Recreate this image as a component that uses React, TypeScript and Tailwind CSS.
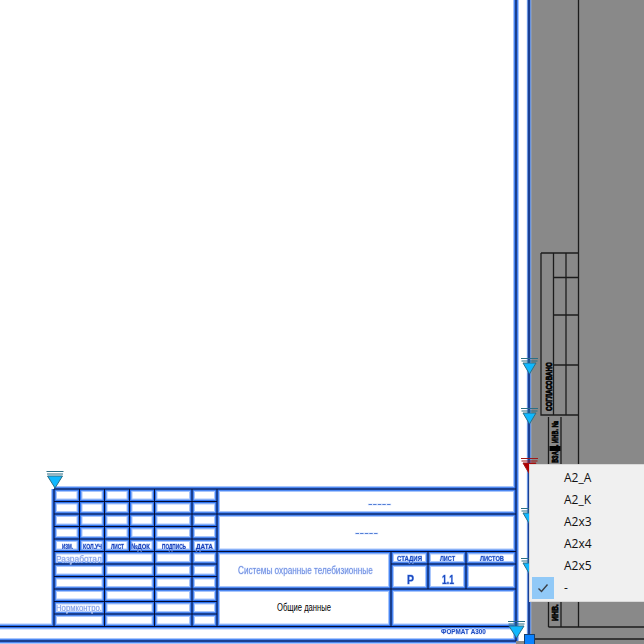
import React, { useLayoutEffect, useRef } from "react";

type L = [number, number, number, number];

const lines: L[] = [
  [516, 0, 516, 641],
  [0, 626.5, 516, 626.5],
  [0, 641, 516, 641],
  [54, 489, 516, 489],
  [54, 489, 54, 626.5],
  [54, 501.5, 217, 501.5],
  [54, 514, 516, 514],
  [54, 526.5, 217, 526.5],
  [54, 539, 217, 539],
  [54, 551.5, 516, 551.5],
  [54, 564, 217, 564],
  [54, 576.5, 217, 576.5],
  [54, 589, 516, 589],
  [54, 601.5, 217, 601.5],
  [54, 614, 217, 614],
  [79.5, 489, 79.5, 551.5],
  [104.5, 489, 104.5, 626.5],
  [129.5, 489, 129.5, 551.5],
  [154.5, 489, 154.5, 626.5],
  [192, 489, 192, 626.5],
  [217, 489, 217, 626.5],
  [391, 551.5, 391, 626.5],
  [428, 551.5, 428, 589],
  [466, 551.5, 466, 589],
  [391, 564, 516, 564],
];

const d = lines.map(([a, b, c, e]) => `M${a} ${b}L${c} ${e}`).join("");

const blackLines =
  "M578.5 0V627M541 253H578.5M541 253V415H578.5M553.5 253V415M566 253V415M553.5 277.5H578.5M553.5 315H578.5M553.5 365H578.5M548.5 417V627M561 417V627M548.5 627H644M531 639H644";

const markers: { x: number; y: number; red?: boolean; big?: boolean }[] = [
  { x: 529.5, y: 358 },
  { x: 529.5, y: 408 },
  { x: 529.5, y: 458, red: true },
  { x: 529.5, y: 508 },
  { x: 529.5, y: 558 },
  { x: 516.5, y: 621, big: true },
  { x: 55, y: 471, big: true },
];

function Marker({ x, y, red, big }: { x: number; y: number; red?: boolean; big?: boolean }) {
  const stroke = red ? "#a01818" : "#2b6f86";
  const fill = red ? "#b00000" : "#10b8ff";
  const h = big ? 17 : 16;
  const w = big ? 7.5 : 6.5;
  return (
    <g>
      <path d={`M${x - 8.5} ${y + 0.5}H${x + 8.5}M${x - 8} ${y + 3}H${x + 8}`} stroke={stroke} strokeWidth="1.2" fill="none" />
      <path d={`M${x - w} ${y + 5}H${x + w}L${x} ${y + h}Z`} fill={fill} stroke={stroke} strokeWidth="1" />
    </g>
  );
}

type T = { x: number; y: number; s: string; w: number; size: number; fill: string; bold?: boolean; halo?: string; heavy?: boolean };

// Squeezes a label to the width it has in the drawing (the drawing's font is a narrow CAD one).
function FitText({ t, rotate }: { t: T; rotate?: boolean }) {
  const ref = useRef<SVGTextElement>(null);
  useLayoutEffect(() => {
    const el = ref.current;
    if (!el) return;
    const k = t.w / el.getComputedTextLength();
    el.setAttribute(
      "transform",
      `translate(${t.x} ${t.y})${rotate ? " rotate(-90)" : ""} scale(${k} 1)`
    );
  }, [t, rotate]);
  return (
    <text
      ref={ref}
      fontSize={t.size}
      fontWeight={t.bold ? 700 : 400}
      fill={t.fill}
      stroke={t.heavy ? "#000000" : t.halo}
      strokeWidth={t.heavy ? 0.7 : t.halo ? 1 : 0}
      paintOrder="stroke"
      className={t.halo ? "blur-[0.35px]" : ""}
    >
      {t.s}
    </text>
  );
}

const HEAD = "#1a3fb8";
const SOFT = "#7f9ce6";
const H1 = "#a9c6fb";
const H2 = "#dbe6fe";

const texts: T[] = [
  { x: 62, y: 549, s: "ИЗМ.", w: 11, size: 8, fill: HEAD, bold: true, halo: H1 },
  { x: 83, y: 549, s: "КОЛ.УЧ", w: 19, size: 8, fill: HEAD, bold: true, halo: H1 },
  { x: 111, y: 549, s: "ЛИСТ", w: 13, size: 8, fill: HEAD, bold: true, halo: H1 },
  { x: 131, y: 549, s: "№ДОК", w: 19, size: 8, fill: HEAD, bold: true, halo: H1 },
  { x: 162, y: 549, s: "ПОДПИСЬ", w: 24, size: 8, fill: HEAD, bold: true, halo: H1 },
  { x: 196, y: 549, s: "ДАТА", w: 17, size: 8, fill: HEAD, bold: true, halo: H1 },
  { x: 56, y: 562, s: "Разработал", w: 46, size: 9, fill: SOFT, halo: H2 },
  { x: 56, y: 611, s: "Нормконтро.", w: 46, size: 9, fill: SOFT, halo: H2 },
  { x: 368, y: 507, s: "-----", w: 23, size: 10, fill: "#3f6fd0", halo: H2 },
  { x: 355, y: 536, s: "-----", w: 23, size: 10, fill: "#3f6fd0", halo: H2 },
  { x: 238, y: 574, s: "Системы охранные телебизионные", w: 135, size: 11, fill: "#6f8ee0", halo: H2 },
  { x: 277, y: 611, s: "Общие данные", w: 54, size: 10, fill: "#000000" },
  { x: 397, y: 561, s: "СТАДИЯ", w: 25, size: 8, fill: "#1c4ac0", bold: true, halo: H1 },
  { x: 440, y: 561, s: "ЛИСТ", w: 15, size: 8, fill: "#1c4ac0", bold: true, halo: H1 },
  { x: 480, y: 561, s: "ЛИСТОВ", w: 24, size: 8, fill: "#1c4ac0", bold: true, halo: H1 },
  { x: 407, y: 584, s: "Р", w: 7, size: 12, fill: "#1c4ac0", bold: true, halo: H1 },
  { x: 442, y: 584, s: "1.1", w: 12, size: 12, fill: "#1c4ac0", bold: true, halo: H1 },
  { x: 441, y: 634, s: "ФОРМАТ А300", w: 45, size: 7, fill: "#1c4ac0", bold: true, halo: H2 },
];

const rotated: T[] = [
  { x: 551.5, y: 411, s: "СОГЛАСОВАНО", w: 49, size: 9, fill: "#000000", bold: true, heavy: true },
  { x: 558, y: 463, s: "ВЗАМ. ИНВ. №", w: 42, size: 9, fill: "#000000", bold: true, heavy: true },
  { x: 558, y: 621, s: "ИНВ. № ПОДЛ.", w: 50, size: 9, fill: "#000000", bold: true, heavy: true },
];

const items = ["A2_A", "A2_K", "A2x3", "A2x4", "A2x5", "-"];

export default function App() {
  return (
    <div className="relative h-[644px] w-[644px] overflow-hidden bg-[#898989]">
      <svg width="644" height="644" viewBox="0 0 644 644" className="block font-['Liberation_Sans',sans-serif]">
        <rect x="0" y="0" width="529" height="641" fill="#ffffff" />

        <path d={blackLines} stroke="#1c1c1c" strokeWidth="1.3" fill="none" />

        {rotated.map((t) => (
          <FitText key={t.s} t={t} rotate />
        ))}
        <rect x="549.5" y="446" width="11" height="5" fill="#000000" />

        <path d={d} stroke="#a9c6fb" strokeWidth="6" fill="none" />
        <path d="M529 0V644" stroke="#a9c6fb" strokeWidth="4.5" fill="none" />
        <path d={d} stroke="#2f74f0" strokeWidth="3.6" fill="none" />
        <path d="M529 0V644" stroke="#2b62c8" strokeWidth="3" fill="none" />
        <path d={d} stroke="#060c30" strokeWidth="1" fill="none" />
        <path d="M529 0V644" stroke="#0a1f60" strokeWidth="1" fill="none" />

        {texts.map((t) => (
          <FitText key={t.s + t.x} t={t} />
        ))}

        {markers.map((m) => (
          <Marker key={`${m.x}-${m.y}`} {...m} />
        ))}
        <rect x="524.5" y="634.5" width="10" height="10" fill="#0a82ff" stroke="#17406f" strokeWidth="1" />
      </svg>

      <div className="absolute left-[529px] top-[464px] flex w-[120px] flex-col border border-[#d9d9d9] bg-[#f0f0f0] py-[2px] pl-[2px] font-['Open_Sans',sans-serif] text-[12px] text-[#111111]">
        {items.map((item) => (
          <div key={item} className="flex h-[22px] items-center">
            <span
              className={
                item === "-"
                  ? "flex h-[22px] w-[22px] items-center justify-center bg-[#91c9f7]"
                  : "h-[22px] w-[22px]"
              }
            >
              {item === "-" && (
                <svg width="12" height="10" viewBox="0 0 12 10">
                  <path d="M1.5 5.5L4.5 8.5L10.5 1.5" stroke="#3a3f46" strokeWidth="1.4" fill="none" />
                </svg>
              )}
            </span>
            <span className="pl-[10px]">{item}</span>
          </div>
        ))}
      </div>
    </div>
  );
}
